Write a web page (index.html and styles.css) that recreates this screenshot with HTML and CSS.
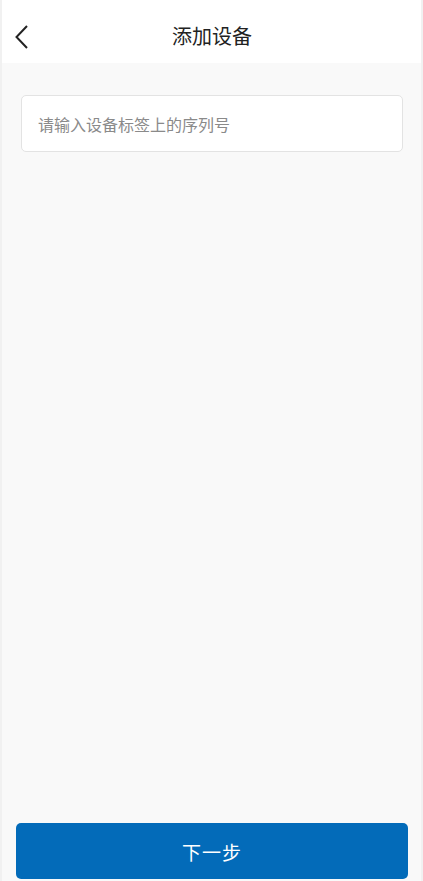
FILE: index.html
```html
<!DOCTYPE html>
<html lang="zh">
<head>
<meta charset="utf-8">
<title>添加设备</title>
<link rel="stylesheet" href="styles.css">
</head>
<body>
<div class="app">
  <header class="topbar">
    <button class="back" aria-label="返回">
      <svg width="16" height="26" viewBox="0 0 16 26"><path d="M13 2 L2.5 13 L13 24" fill="none" stroke="#222" stroke-width="2"/></svg>
    </button>
    <h1 class="title">添加设备</h1>
  </header>
  <main class="content">
    <div class="field">
      <input class="input" type="text" placeholder="请输入设备标签上的序列号">
    </div>
    <div class="spacer"></div>
    <button class="next">下一步</button>
  </main>
</div>
</body>
</html>
```
FILE: styles.css
```css
* { box-sizing: border-box; }
html, body { margin: 0; padding: 0; height: 100%; }
body {
  background: #f1f1f1;
  font-family: "Noto Sans CJK SC", "Noto Sans", sans-serif;
}
.app {
  margin: 0 2px;
  height: 881px;
  display: flex;
  flex-direction: column;
  background: #f9f9f9;
}
.topbar {
  height: 63px;
  background: #fff;
  display: flex;
  align-items: center;
  justify-content: center;
  position: relative;
}
.back {
  position: absolute;
  left: 12px;
  top: 24px;
  border: 0;
  background: none;
  padding: 0;
  width: 16px;
  height: 26px;
  display: flex;
}
.title {
  margin: 0;
  font-size: 20px;
  font-weight: 400;
  color: #222;
  line-height: 28px;
  margin-top: 9px;
  margin-left: 1px;
}
.content {
  flex: 1;
  display: flex;
  flex-direction: column;
  padding: 32px 13px 2px 14px;
}
.field {
  margin: 0 5px;
}
.input {
  width: 100%;
  height: 57px;
  border: 1px solid #e3e3e3;
  border-radius: 5px;
  background: #fff;
  padding: 0 16px;
  font-size: 16px;
  font-family: inherit;
  color: #333;
  outline: none;
}
.input::placeholder { color: #8a8a8a; }
.spacer { flex: 1; }
.next {
  height: 56px;
  border: 0;
  border-radius: 5px;
  background: #036bb9;
  color: #fff;
  font-size: 19px;
  font-family: inherit;
  letter-spacing: 1px;
}
```
